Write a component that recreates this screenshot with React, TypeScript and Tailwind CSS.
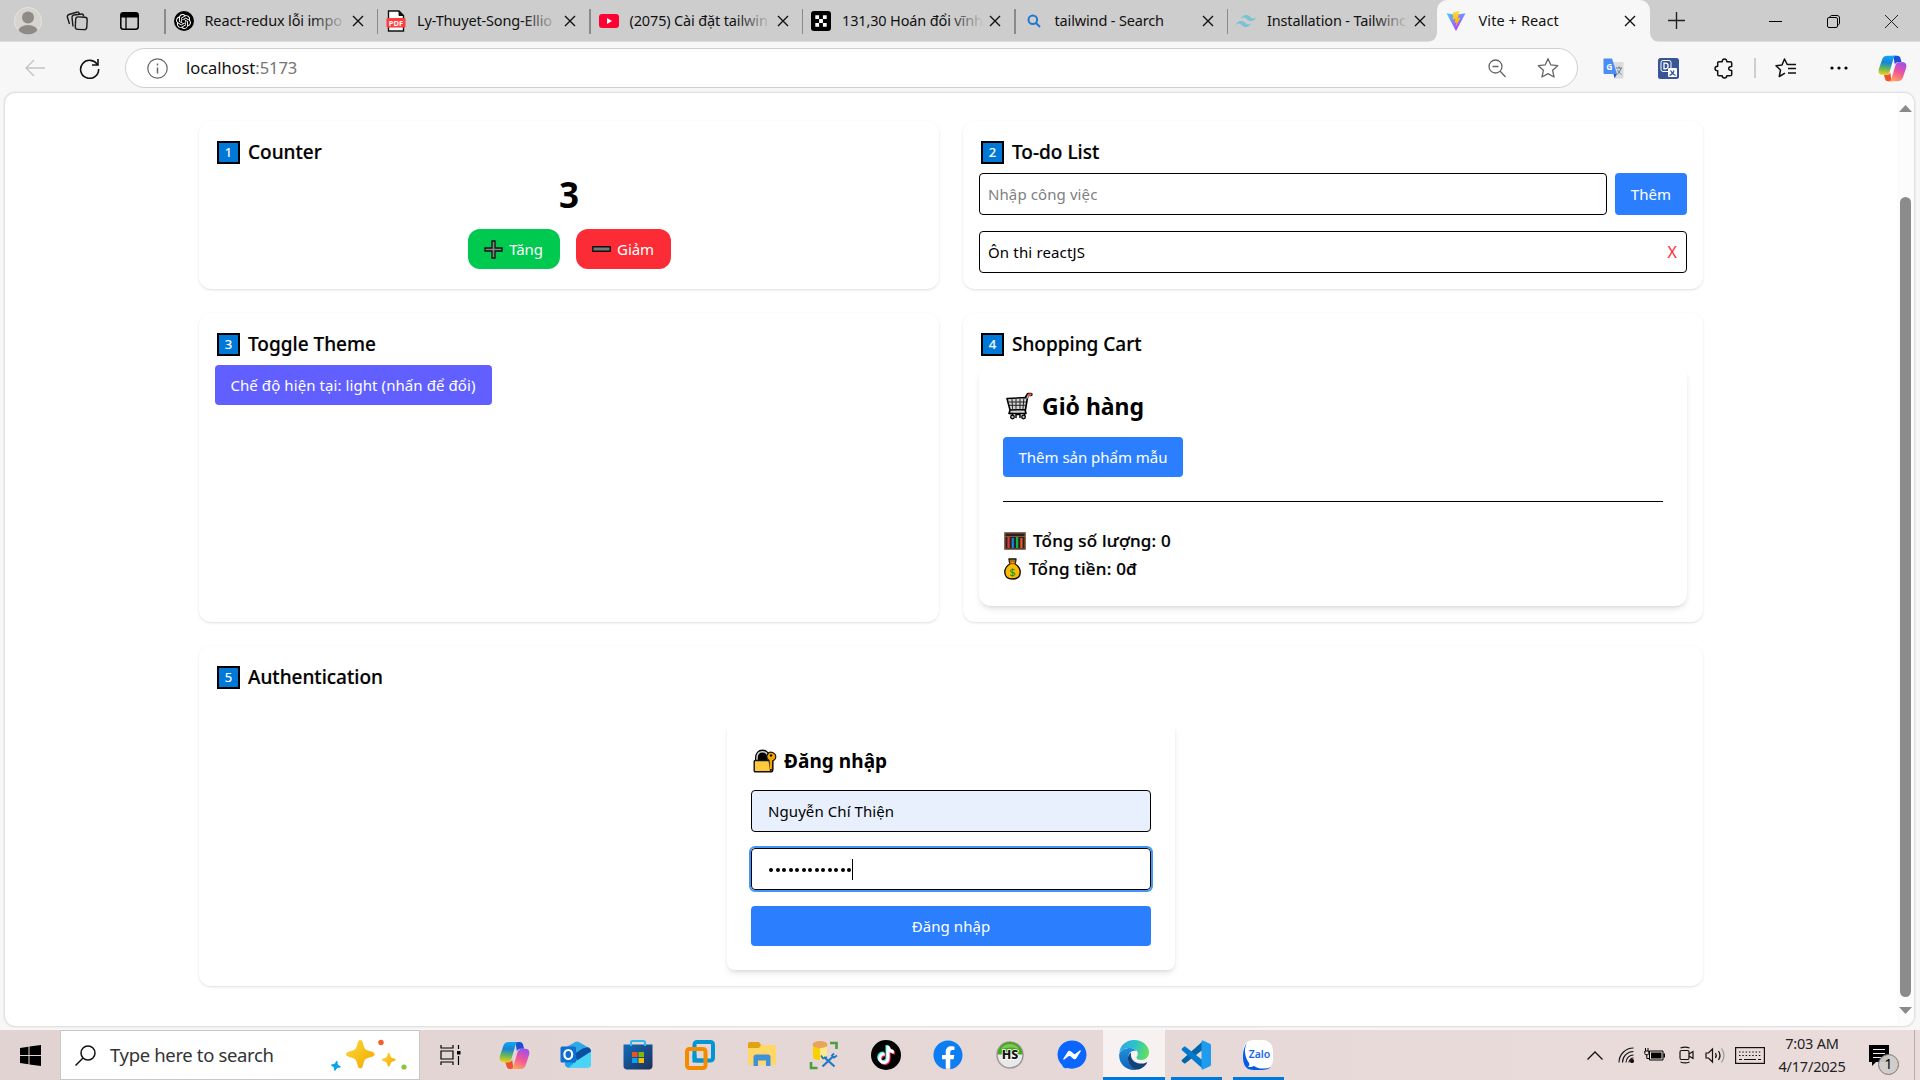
import React from 'react';
import { SiOpenai, SiTailwindcss } from 'react-icons/si';
import { FaTiktok, FaFacebook, FaFacebookMessenger } from 'react-icons/fa';

type Kids = { children?: React.ReactNode };

/* ---------- shared drawings ---------- */

function Copilot({ size, id }: { size: number; id: string }) {
  return (
    <svg width={size} height={size} viewBox="0 0 32 32">
      <defs>
        <linearGradient id={id + 'a'} x1="0.4" y1="0" x2="0.3" y2="1">
          <stop offset="0" stopColor="#12a5f0" />
          <stop offset="0.35" stopColor="#1784d8" />
          <stop offset="0.65" stopColor="#5fb560" />
          <stop offset="1" stopColor="#f5cf12" />
        </linearGradient>
        <linearGradient id={id + 'b'} x1="0.7" y1="0" x2="0.3" y2="1">
          <stop offset="0" stopColor="#a04df0" />
          <stop offset="0.5" stopColor="#f0559b" />
          <stop offset="1" stopColor="#ffa35c" />
        </linearGradient>
      </defs>
      <path d="M17 2h4.500c1.800 0 2.800 1 3.300 2.800L26 9h-4c-2 0-3 1-3.500 2.800z" fill="#1c4fd6" />
      <path d="M15 30h-4c-1.800 0-2.700-1-3.200-2.800L6.500 23H10c2 0 3-1 3.500-2.800z" fill="#f0512e" />
      <path d="M10.500 2H20c-1.600.3-2.400 1.500-3 3.500L12.800 19.500c-.8 2.400-2 3.500-4.300 3.500H5c-4 0-5-3-4-6.500L4.500 6C5.500 3 7.500 2 10.500 2z" fill={`url(#${id}a)`} />
      <path d="M21.500 30H12c1.600-.3 2.400-1.500 3-3.500l4.200-14c.8-2.400 2-3.500 4.300-3.500H27c4 0 5 3 4 6.500L27.500 26c-1 3-3 4-6 4z" fill={`url(#${id}b)`} />
    </svg>
  );
}

function Close() {
  return (
    <svg width="12" height="12" viewBox="0 0 12 12" className="shrink-0" fill="none" stroke="#111" strokeWidth="1.4">
      <path d="M1 1l10 10M11 1L1 11" />
    </svg>
  );
}

/* ---------- browser chrome ---------- */

function PdfIcon() {
  return (
    <svg width="20" height="22" viewBox="0 0 20 22">
      <path d="M2.500 1H13l4.500 4.500V21h-15z" fill="#fff" stroke="#111" strokeWidth="1.400" />
      <path d="M13 1v4.500h4.500z" fill="#111" stroke="#111" />
      <rect x="0.500" y="8" width="19" height="9.500" rx="1" fill="#ff3d3d" />
      <text x="10" y="15.500" textAnchor="middle" fontSize="7.500" fontWeight="700" fill="#fff" fontFamily="Noto Sans, sans-serif">PDF</text>
    </svg>
  );
}
function YoutubeIcon() {
  return (
    <svg width="20" height="14" viewBox="0 0 20 14">
      <rect width="20" height="14" rx="3" fill="#ff0033" />
      <path d="M8 4v6l5-3z" fill="#fff" />
    </svg>
  );
}
function OkxIcon() {
  return (
    <svg width="20" height="20" viewBox="0 0 20 20">
      <rect width="20" height="20" rx="3" fill="#000" />
      <path d="M4.300 4.300h3.800v3.800H4.300zM11.900 4.300h3.800v3.800h-3.800zM8.100 8.100h3.800v3.800H8.100zM4.300 11.900h3.800v3.800H4.300zM11.900 11.900h3.800v3.800h-3.800z" fill="#fff" />
    </svg>
  );
}
function BingSearch() {
  return (
    <svg width="14" height="14" viewBox="0 0 14 14" fill="none" stroke="#1f77d0" strokeWidth="2">
      <circle cx="5.800" cy="5.800" r="4.300" />
      <path d="M9 9l4 4" />
    </svg>
  );
}
function ViteIcon() {
  return (
    <svg width="20" height="20" viewBox="0 0 20 20">
      <defs>
        <linearGradient id="vt" x1="0" y1="0" x2="0.600" y2="1">
          <stop offset="0" stopColor="#41d1ff" />
          <stop offset="1" stopColor="#bd34fe" />
        </linearGradient>
        <linearGradient id="vb" x1="0" y1="0" x2="0" y2="1">
          <stop offset="0" stopColor="#ffdd35" />
          <stop offset="1" stopColor="#ffa800" />
        </linearGradient>
      </defs>
      <path d="M.5 2.200L10 3.700l9.500-1.500L10 20z" fill="url(#vt)" />
      <path d="M13.500 0L7.200 1.200l-.5 7.300 2.700-.5-.8 3.700 1.900-.5-.8 4.600 4.800-9-2.700.5z" fill="url(#vb)" />
    </svg>
  );
}

function Tab({ icon, title, fade }: { icon: React.ReactNode; title: string; fade?: boolean }) {
  return (
    <div className="flex h-[42px] w-[212.5px] items-center">
      <div className="h-[25px] w-[1.5px] bg-[#8a8a8a]" />
      <div className="ml-[7px] flex w-[22px] justify-center">{icon}</div>
      <div className="relative mt-[-2px] ml-[10px] w-[138px]">
        <div className="text-[14.500px] leading-6 tracking-[-0.150px] whitespace-nowrap text-[#111]">{title}</div>
        {fade && <div className="absolute inset-y-0 -right-1 w-9 bg-linear-to-r from-[#cdcdcd]/0 to-[#cdcdcd]" />}
      </div>
      <div className="relative ml-[9px]"><Close /></div>
    </div>
  );
}

function TabBar() {
  return (
    <div className="flex h-[42px] bg-[#cdcdcd] shadow-[inset_0_-1px_0_#dedede]">
      <div className="flex w-[164px] items-center">
        <svg width="28" height="28" viewBox="0 0 28 28" className="ml-[14px]">
          <clipPath id="av"><circle cx="14" cy="14" r="13.500" /></clipPath>
          <circle cx="14" cy="14" r="13.500" fill="#d6d4cf" stroke="#e6e4e0" />
          <g clipPath="url(#av)" fill="#8d8a87">
            <circle cx="14" cy="10.500" r="6" />
            <ellipse cx="14" cy="25" rx="10" ry="7" />
          </g>
        </svg>
        <svg width="22" height="20" viewBox="0 0 22 20" className="ml-[24px]" fill="none" stroke="#1a1a1a" strokeWidth="1.400" strokeLinejoin="round">
          <rect x="9.500" y="6" width="11.500" height="12.500" rx="2.500" transform="rotate(3 15 12)" />
          <path d="M7 15.500l-1-9C5.900 5 6.500 4.200 8 4l8-1M3.500 13l-2-6.500C1 5 1.500 4 3 3.500L11.500 1" />
          <path d="M16 3c1 0 1.500.8 1.600 2.500M11.500 1c1 0 1.500.4 2 2" />
        </svg>
        <svg width="19" height="18" viewBox="0 0 19 18" className="ml-[32px]">
          <rect x="0.800" y="0.800" width="17.400" height="16.400" rx="2.500" fill="none" stroke="#000" strokeWidth="1.500" />
          <path d="M.8 5.500V3c0-1.300.9-2.200 2.200-2.200h13c1.300 0 2.200.9 2.200 2.200v2.500z" />
          <path d="M6 5v12" stroke="#000" strokeWidth="1.300" />
        </svg>
      </div>
      <Tab icon={<div className="flex size-5 items-center justify-center rounded-full bg-black"><SiOpenai size={15} color="#fff" /></div>} title="React-redux lỗi impo" fade />
      <Tab icon={<PdfIcon />} title="Ly-Thuyet-Song-Ellio" fade />
      <Tab icon={<YoutubeIcon />} title="(2075) Cài đặt tailwin" fade />
      <Tab icon={<OkxIcon />} title="131,30 Hoán đổi vĩnh" fade />
      <Tab icon={<BingSearch />} title="tailwind - Search" />
      <div className="w-[210px]"><Tab icon={<SiTailwindcss size={20} color="#73c5d2" />} title="Installation - Tailwinc" fade /></div>
      <div className="relative flex h-[42px] w-[213px] items-center rounded-t-[10px] bg-[#f7f7f7]">
        <svg width="233" height="10" viewBox="0 0 233 10" className="absolute bottom-0 -left-[10px]" fill="#f7f7f7">
          <path d="M0 10c6 0 10-4 10-10h213c0 6 4 10 10 10z" />
        </svg>
        <div className="relative ml-[9px]"><ViteIcon /></div>
        <div className="relative mt-[-2px] ml-[13px] w-[145px] text-[14.500px] leading-6 tracking-[0.100px] text-[#111]">Vite + React</div>
        <div className="relative"><Close /></div>
      </div>
      <svg width="17" height="17" viewBox="0 0 17 17" className="mt-[12px] ml-[18px]" stroke="#222" strokeWidth="1.400"><path d="M8.500 0v17M0 8.500h17" /></svg>
      <div className="flex flex-1 items-center justify-end gap-[45px] pr-[22px]">
        <svg width="13" height="13" viewBox="0 0 13 13" stroke="#000"><path d="M0 6.500h13" /></svg>
        <svg width="13" height="13" viewBox="0 0 13 13" fill="none" stroke="#000"><rect x="0.500" y="2.500" width="10" height="10" rx="1.500" /><path d="M3 2.500C3 1.200 3.700.5 5 .5h5c1.600 0 2.500.9 2.500 2.500v5c0 1.200-.7 2-2 2" /></svg>
        <svg width="13" height="13" viewBox="0 0 13 13" stroke="#222"><path d="M0 0l13 13M13 0L0 13" /></svg>
      </div>
    </div>
  );
}

const star = 'M10 1.500l2.600 5.700 6.200.7-4.600 4.200 1.300 6.100L10 15.100l-5.500 3.100 1.300-6.100L1.200 7.900l6.200-.7z';

function Toolbar() {
  return (
    <div className="flex h-[51px] items-center pt-[1px]">
      <svg width="20" height="18" viewBox="0 0 20 18" className="ml-[25px]" fill="none" stroke="#c4c4c4" strokeWidth="1.400"><path d="M20 9H1M9 1L1 9l8 8" /></svg>
      <svg width="21" height="21" viewBox="0 0 21 21" className="ml-[34px]" fill="none" stroke="#111" strokeWidth="1.600"><path d="M18.500 7A9 9 0 1 0 19.600 11" /><path d="M19 1v6h-6" /></svg>
      <div className="ml-[25px] flex h-[40px] w-[1453px] items-center rounded-full border border-[#cfcfcf] bg-white">
        <svg width="21" height="21" viewBox="0 0 21 21" className="ml-[21px]" fill="none" stroke="#666" strokeWidth="1.200"><circle cx="10.500" cy="10.500" r="9.700" /><path d="M10.500 9.500v6M10.500 5.500v2" strokeWidth="1.500" /></svg>
        <div className="ml-[18px] flex-1 text-[16.500px] tracking-[-0.050px] text-[#111]">localhost<span className="text-[#757575]">:5173</span></div>
        <svg width="18" height="19" viewBox="0 0 18 19" fill="none" stroke="#666" strokeWidth="1.300"><circle cx="7.500" cy="7.500" r="6.500" /><path d="M12.200 12.200l5.300 5.800M4.500 7.500h6" /></svg>
        <svg width="22" height="22" viewBox="0 0 20 20" className="mr-[18px] ml-[31px]" fill="none" stroke="#666" strokeWidth="1.200" strokeLinejoin="round"><path d={star} /></svg>
      </div>
      <svg width="21" height="21" viewBox="0 0 21 21" className="ml-[25px]">
        <path d="M8 4h11.500c.6 0 1 .4 1 1v14.500c0 .6-.4 1-1 1H12z" fill="#dcdcdc" />
        <path d="M10.500 16H14l-2.500 4.500z" fill="#3256c8" />
        <path d="M1.200.5H9L14 16H1.500C1 16 .5 15.500.5 15V1.200C.5.800.8.500 1.200.500z" fill="#4b8df8" />
        <text x="6.300" y="11.500" textAnchor="middle" fontSize="8.500" fontWeight="700" fill="#fff" fontFamily="Noto Sans, sans-serif">G</text>
        <path d="M13 10h6M16 8.500V10M18 10c-.8 3-2.300 5-4 6.500M14.500 12c1 2 2.300 3.300 4 4.500" stroke="#5f7d8c" fill="none" />
      </svg>
      <svg width="21" height="21" viewBox="0 0 21 21" className="ml-[34px]">
        <rect width="21" height="21" rx="2.500" fill="#3a5596" />
        <rect x="3" y="2.500" width="10" height="11" rx="2" fill="none" stroke="#fff" strokeWidth="1" />
        <path d="M6 5.200h1.500c3.500 0 3.500 5.600 0 5.600H6z" fill="none" stroke="#fff" strokeWidth="1.300" />
        <rect x="10" y="10" width="9" height="9" rx="1" fill="#fff" />
        <path d="M11.500 17.500c3-1 4-3 4.500-5M12.500 12.500c1 2.500 3 4 5 5" stroke="#3a5596" fill="none" strokeWidth="1.200" />
      </svg>
      <svg width="21" height="21" viewBox="0 0 21 21" className="ml-[35px]" fill="none" stroke="#111" strokeWidth="1.500" strokeLinejoin="round">
        <path d="M5 3.800h3.200c0-1.800.8-2.800 2.300-2.800s2.300 1 2.300 2.800H16c.8 0 1.700.5 1.700 1.300v3.400c-1.700 0-3 .7-3 2s1.300 2 3 2v4c0 .8-.9 1.300-1.700 1.300h-3.200c0 1.500-.8 2.200-2.300 2.200s-2.300-.7-2.300-2.200H5c-.8 0-1.300-.5-1.300-1.300v-3.700C2 12.800 1 11.900 1 10.500s1-2.300 2.700-2.300V5.100c0-.8.500-1.300 1.300-1.300z" />
      </svg>
      <div className="ml-[19px] h-5 w-[2px] bg-[#cfcfcf]" />
      <svg width="21" height="20" viewBox="0 0 21 20" className="ml-[19px]" fill="none" stroke="#111" strokeWidth="1.500" strokeLinejoin="round">
        <path d="M12.500 7L9.500 1 7 7l-6 .8 4.500 4.200-1.200 6.500L10 15.200M13 10.500h8M13 15h8M12.500 6.500H21" />
      </svg>
      <svg width="18" height="4" viewBox="0 0 18 4" className="ml-[34px]"><circle cx="2" cy="2" r="1.600" /><circle cx="9" cy="2" r="1.600" /><circle cx="16" cy="2" r="1.600" /></svg>
      <div className="ml-[30px]"><Copilot size={29} id="ct" /></div>
    </div>
  );
}

/* ---------- page ---------- */

function Keycap({ n }: { n: string }) {
  return (
    <span className="mr-[8px] ml-[2px] flex h-[23px] w-[23px] items-center justify-center border-2 border-black bg-[#0078d7] text-[13px] leading-none font-normal text-white">{n}</span>
  );
}

function Section({ n, title, className, children }: Kids & { n: string; title: string; className?: string }) {
  return (
    <section className={'rounded-xl p-4 shadow-[0_1px_3px_rgba(0,0,0,0.1),0_1px_2px_-1px_rgba(0,0,0,0.1)] ' + (className || '')}>
      <h2 className="mb-2 flex h-7 items-center pt-[2px] text-[19px] font-medium tracking-[0px] [-webkit-text-stroke:0.200px]"><Keycap n={n} />{title}</h2>
      {children}
    </section>
  );
}

function CartEmoji() {
  return (
    <svg width="28" height="28" viewBox="0 0 28 28" fill="none" strokeLinejoin="round" strokeLinecap="round">
      <path d="M21 6l2-3.500h3" stroke="#000" strokeWidth="3.400" />
      <path d="M2 6.500l20.500-1-2 12-15.500.5zM5 18l-1 3.500h17l-1-4" fill="#d4d4d4" stroke="#000" strokeWidth="1.600" />
      <path d="M7 7.500l.5 9M11 7.500v9M15 7v9.500M18.800 7l-.8 9.500M3.500 10h17M4 13.300h16.500" stroke="#222" strokeWidth="1" />
      <path d="M22 6l1.500-3.200h2" stroke="#bbb" strokeWidth="1.400" />
      <path d="M24 2.600l1.500-.2" stroke="#e8523a" strokeWidth="2.400" />
      <path d="M5 21.500h2.500v4M11 25.500v-3h4v3M19.500 21.500v4" stroke="#000" strokeWidth="1.500" />
      <circle cx="7.500" cy="25" r="1.800" fill="#bbb" stroke="#000" strokeWidth="1.300" />
      <circle cx="18.500" cy="25" r="1.800" fill="#bbb" stroke="#000" strokeWidth="1.300" />
    </svg>
  );
}
function Abacus() {
  return (
    <svg width="22" height="18" viewBox="0 0 22 18">
      <rect x="1" y="1" width="20" height="16" fill="#2a211c" stroke="#6b4a35" strokeWidth="1.600" />
      <path d="M4.500 5v11" stroke="#e33" strokeWidth="2.200" />
      <path d="M8.800 6v10" stroke="#0c8ae0" strokeWidth="2.200" />
      <path d="M13.100 5v11" stroke="#16b04a" strokeWidth="2.200" />
      <path d="M17.400 6v10" stroke="#e55a28" strokeWidth="2.200" />
      <path d="M1 4.500h20" stroke="#7a5a44" />
    </svg>
  );
}
function MoneyBag() {
  return (
    <svg width="17" height="22" viewBox="0 0 17 22">
      <path d="M5 1h7l-.8 5c3.200 2 5 5 5 8 0 4.500-2.700 7-7.700 7S.8 18.500.8 14c0-3 1.800-6 5-8z" fill="#fdb900" stroke="#111" strokeWidth="1.400" strokeLinejoin="round" />
      <path d="M5.500 3h6M5.500 5.500h6" stroke="#9c5a10" strokeWidth="1.500" />
      <text x="8.500" y="17.500" textAnchor="middle" fontSize="11" fontWeight="500" fill="#189a2c" fontFamily="Noto Sans, sans-serif">$</text>
    </svg>
  );
}
function LockKey() {
  return (
    <svg width="24" height="24" viewBox="0 0 24 24">
      <path d="M3 12V9C3 4.500 5.500 1.500 9.500 1.500S16 4.500 16 9v3z" fill="#000" stroke="#000" strokeWidth="2" />
      <path d="M4 12V9c0-4 2-6.300 5.500-6.300S15 5 15 9v3" fill="none" stroke="#d4d4d4" strokeWidth="1.500" />
      <path d="M6 11.500V9.500c0-3 1.500-4.500 3.500-4.500s4 2 4 4.500v2z" fill="#000" />
      <rect x="1.200" y="11.500" width="18.500" height="11.300" rx="1" fill="#ffc83d" stroke="#111" strokeWidth="1.400" />
      <path d="M16 12h3v10h-3z" fill="#f3a600" />
      <path d="M16 11.500c-2-1.500-2.700-3.700-1.800-5.500 1-2.300 3.500-3.200 5.800-2.300s3.300 3.400 2.400 5.800c-.6 1.400-1.700 2-2.700 2.400V20l-2 1.500z" fill="#f3a600" stroke="#111" strokeWidth="1.200" />
      <path d="M16.700 11.800h2.300V20h-2.300z" fill="#f3a600" />
      <circle cx="18" cy="6.500" r="1.200" fill="#111" />
    </svg>
  );
}

function Content() {
  return (
    <main className="flex-1 pt-[28px] pr-[194px] pl-[194px]">
      <div className="grid grid-cols-2 gap-6">
        <Section n="1" title="Counter" className="h-[168px]">
          <div className="pt-[3px] text-center text-[35px] leading-[37px] font-bold">3</div>
          <div className="mt-4 flex justify-center gap-4 text-[15px] text-white">
            <button className="flex h-10 w-[92px] items-center justify-center rounded-xl bg-[#00c950] tracking-[-0.100px]">
              <svg width="19" height="19" viewBox="0 0 19 19" className="mr-[6px]"><path d="M8 1h3v7h7v3h-7v7H8v-7H1V8h7z" fill="#858585" stroke="#111" strokeWidth="1.300" /></svg>
              Tăng
            </button>
            <button className="flex h-10 w-[95px] items-center justify-center rounded-xl bg-[#fb2c36] tracking-[-0.100px]">
              <svg width="19" height="6" viewBox="0 0 19 6" className="mr-[6px]"><path d="M.8.8h17.400v4.400H.8z" fill="#777" stroke="#111" strokeWidth="1.400" /></svg>
              Giảm
            </button>
          </div>
        </Section>

        <Section n="2" title="To-do List" className="h-[168px] text-[15px]">
          <div className="flex gap-2">
            <div className="flex h-[42px] flex-1 items-center rounded border border-black px-2 tracking-[0.100px] text-[#808080]">Nhập công việc</div>
            <button className="h-[42px] w-[72px] rounded bg-[#2b7fff] tracking-[0.050px] text-white">Thêm</button>
          </div>
          <div className="mt-4 flex h-[42px] items-center justify-between rounded border border-black pr-[9px] pl-2 tracking-[0.150px]">
            <span>Ôn thi reactJS</span>
            <span className="text-[16px] text-[#fb2c36]">X</span>
          </div>
        </Section>

        <Section n="3" title="Toggle Theme">
          <button className="h-10 w-[277px] rounded bg-[#615fff] pr-[1px] text-[15px] tracking-[0.080px] whitespace-nowrap text-white">Chế độ hiện tại: light (nhấn để đổi)</button>
        </Section>

        <Section n="4" title="Shopping Cart" className="h-[309px]">
          <div className="h-[241px] rounded-xl p-6 shadow-md">
            <h3 className="mb-4 flex h-8 items-center pt-[2px] text-[23px] font-bold tracking-[0px]"><span className="mr-[9px] ml-[2px]"><CartEmoji /></span>Giỏ hàng</h3>
            <button className="h-10 w-[180px] rounded bg-[#2b7fff] text-[15px] tracking-[-0.020px] whitespace-nowrap text-white">Thêm sản phẩm mẫu</button>
            <div className="my-6 h-px bg-black" />
            <div className="text-[17px] leading-7 font-medium tracking-[0.200px] [-webkit-text-stroke:0.200px]">
              <div className="flex h-7 items-center pt-[1px]"><span className="mr-[7px] ml-[1px]"><Abacus /></span>Tổng số lượng: 0</div>
              <div className="flex h-7 items-center pt-[1px]"><span className="mr-[8px] ml-[1px]"><MoneyBag /></span>Tổng tiền: 0đ</div>
            </div>
          </div>
        </Section>

        <Section n="5" title="Authentication" className="col-span-2 h-[340px]">
          <div className="mx-auto mt-[32px] h-[248px] w-[448px] rounded-lg p-6 text-[15px] shadow-md">
            <h3 className="mb-4 flex h-7 items-center pt-[2px] text-[19px] font-bold tracking-[0.050px]"><span className="mr-[7px] ml-[2px]"><LockKey /></span>Đăng nhập</h3>
            <div className="flex h-[42px] items-center rounded border border-black bg-[#e8f0fe] px-4 tracking-[0.080px]">Nguyễn Chí Thiện</div>
            <div className="mt-4 flex h-[42px] items-center rounded border border-black px-4 outline-2 outline-[#4196f7]">
              <div className="mt-[2px] flex gap-[2.500px] pl-[1px]">
                {Array.from({ length: 13 }, (_, i) => <span key={i} className="size-[4px] rounded-full bg-black" />)}
              </div>
              <div className="ml-px h-[21px] w-px bg-black" />
            </div>
            <button className="mt-4 h-10 w-full rounded bg-[#2b7fff] tracking-[0.050px] text-white">Đăng nhập</button>
          </div>
        </Section>
      </div>
    </main>
  );
}

/* ---------- taskbar ---------- */

const spark = 'M10 0c1.200 0 1.600 1 2.100 3C13 6.500 13.500 7 17 7.900c2 .5 3 1 3 2.100s-1 1.600-3 2.100c-3.500.9-4 1.400-4.900 4.900-.5 2-1 3-2.100 3s-1.600-1-2.100-3C7 13.500 6.500 13 3 12.100c-2-.5-3-1-3-2.100s1-1.600 3-2.100C6.500 7 7 6.500 7.900 3 8.400 1 8.900 0 10 0z';

function Sparkles() {
  return (
    <svg width="78" height="34" viewBox="0 0 78 34">
      <defs><linearGradient id="sg" x1="0" y1="0" x2="1" y2="1"><stop offset="0" stopColor="#ffd83a" /><stop offset="1" stopColor="#f0a800" /></linearGradient></defs>
      <path d={spark} transform="translate(15 2) scale(1.430)" fill="url(#sg)" />
      <path d={spark} transform="translate(51 15) scale(0.680)" fill="url(#sg)" />
      <path d={spark} transform="translate(1 22) rotate(12) scale(0.500)" fill="#08a4ee" />
      <circle cx="50" cy="4.500" r="2.700" fill="#f2602a" />
      <circle cx="73" cy="29" r="2.600" fill="#8cc63f" />
    </svg>
  );
}

function Outlook() {
  return (
    <svg width="32" height="30" viewBox="0 0 32 30">
      <path d="M5 8L15.500 2c1.200-.7 2.200-.7 3.400 0L29 8c1.300.8 2 1.800 2 3.500V24c0 2-1.300 3.500-3.500 3.500H9c-2.500 0-4-1.500-4-4z" fill="#2aabe8" />
      <path d="M5 21l26-9.500V24c0 2-1.300 3.500-3.500 3.500H9c-2.500 0-4-1.500-4-4z" fill="#49d5f8" />
      <path d="M5 17l14.500 1L9 27.500c-2.500 0-4-1.500-4-4z" fill="#1aa3e8" />
      <path d="M14 12l6-3.200L28 7.300c2 1 3 2 3 4.200L17 20.500z" fill="#0b4fa3" />
      <path d="M5 8l11-6.300L26 6.500 14 14z" fill="#2fa9e6" />
      <rect x="0.500" y="6.500" width="15.500" height="16" rx="1.500" fill="#0f6fd0" />
      <ellipse cx="8.300" cy="14.500" rx="3.900" ry="4.500" fill="none" stroke="#fff" strokeWidth="2.200" />
    </svg>
  );
}
function Store() {
  return (
    <svg width="30" height="30" viewBox="0 0 30 30">
      <defs><linearGradient id="st" x1="0" y1="0" x2="1" y2="1"><stop offset="0" stopColor="#0f6cbd" /><stop offset="1" stopColor="#1f2f57" /></linearGradient></defs>
      <path d="M.5 4.500h29V26c0 2-1.500 3.500-3.500 3.500H4C2 29.500.5 28 .5 26z" fill="url(#st)" />
      <path d="M8 6V2.500C8 1.500 8.500 1 9.500 1h11c1 0 1.500.5 1.500 1.500V6" fill="none" stroke="#2bb6f2" strokeWidth="2" />
      <rect x="9" y="12" width="5.500" height="5" fill="#f25022" /><rect x="15.500" y="12" width="5.500" height="5" fill="#7fba00" />
      <rect x="9" y="18" width="5.500" height="5" fill="#00a4ef" /><rect x="15.500" y="18" width="5.500" height="5" fill="#ffb900" />
    </svg>
  );
}
function VMware() {
  return (
    <svg width="30" height="30" viewBox="0 0 30 30" fill="none" strokeWidth="4">
      <rect x="9.500" y="2" width="18.500" height="18.500" rx="2.500" stroke="#0095d3" />
      <rect x="2" y="9" width="18.500" height="19" rx="2.500" stroke="#f38b00" />
      <path d="M9.500 14.500V20.500H18" stroke="#0095d3" strokeWidth="4" />
    </svg>
  );
}
function Folder() {
  return (
    <svg width="28" height="26" viewBox="0 0 28 26">
      <path d="M0 2C0 .8.8 0 2 0h9l3 4v4H0z" fill="#dfa310" />
      <path d="M0 6h11l2-3h13c1.200 0 2 .8 2 2v18H0z" fill="#ffd767" />
      <path d="M5.500 24v-9c0-1.500 1-2.500 2.500-2.500h12c1.500 0 2.500 1 2.500 2.500v9H18v-5.500h-8V24z" fill="#3f8fd9" />
    </svg>
  );
}
function DbTool() {
  return (
    <svg width="30" height="30" viewBox="0 0 30 30">
      <path d="M4 4v13c0 2 3 3 7 3s7-1 7-3V4z" fill="#f9d000" />
      <path d="M11 7h7v10c0 2-3 3-7 3z" fill="#ffe98a" />
      <ellipse cx="11" cy="4.500" rx="7.500" ry="3.500" fill="#e8a45c" />
      <path d="M21 3h6.500v6M2 22v6h6.500" fill="none" stroke="#4c9b46" strokeWidth="2.600" />
      <path d="M13.500 26.500L24 16.500M15 17l10.500 9.500" stroke="#1f78c8" strokeWidth="2.200" />
      <path d="M12 15.500l2 3 4-1.500M28 15.500l-3 2-2-2 2-2" stroke="#1f78c8" strokeWidth="1.800" fill="none" />
    </svg>
  );
}
function Tiktok() {
  return (
    <div className="relative flex size-[30px] items-center justify-center rounded-full bg-black">
      <FaTiktok size={18} color="#25f4ee" className="absolute top-[5px] left-[5px]" />
      <FaTiktok size={18} color="#fe2c55" className="absolute top-[7px] left-[7px]" />
      <FaTiktok size={18} color="#fff" className="absolute top-[6px] left-[6px]" />
    </div>
  );
}
function HeidiSql() {
  return (
    <svg width="28" height="28" viewBox="0 0 28 28">
      <circle cx="14" cy="14" r="13" fill="#e9e9e9" stroke="#9a9a9a" strokeWidth="1.500" />
      <path d="M1.500 13.500a12.500 12.500 0 0 1 25 0z" fill="#4aa521" />
      <path d="M5 8a10.500 10.500 0 0 1 18 0q-9-3-18 0z" fill="#7cc858" />
      <text x="14" y="18" textAnchor="middle" fontSize="12.500" fontWeight="800" fill="#111" stroke="#fff" strokeWidth="1.600" paintOrder="stroke" fontFamily="Noto Sans, sans-serif">HS</text>
    </svg>
  );
}
function EdgeIcon() {
  return (
    <svg width="30" height="30" viewBox="0 0 30 30">
      <defs>
        <linearGradient id="e1" x1="0" y1="0.300" x2="1" y2="0.500"><stop offset="0" stopColor="#2ea8e5" /><stop offset="0.500" stopColor="#2cc3c9" /><stop offset="1" stopColor="#66e05a" /></linearGradient>
        <linearGradient id="e2" x1="0" y1="0" x2="0" y2="1"><stop offset="0" stopColor="#1f90dd" /><stop offset="1" stopColor="#0f62b8" /></linearGradient>
      </defs>
      <path d="M.3 13C1 5.500 7 0 15 0c9 0 15 6 15 12.500 0 4.500-3.500 7.500-7.500 7.500-3 0-5-1-5-2.300 0-1 1.300-1.500 1.300-4C18.800 10.500 15.500 8 11 8 6 8 2 10 .3 13z" fill="url(#e1)" />
      <path d="M.2 14C1.500 10.300 6 8 11 8c3.500 0 5.500 1.500 6.300 3C13 9.500 9 13 9 18c0 6 4 11 10 11.500C8 32-.8 24 .2 14z" fill="url(#e2)" />
      <path d="M12 12.500c-2.500 2-3.500 4.300-3 7.500.8 5.500 5 9.800 10.500 9.500 3.500-1 6.800-3.500 8.500-6.500.3-.7-.2-1-.8-.6-1.500.8-3.200 1.200-5 1.200-5.500 0-9.700-3.300-10.200-7.600-.2-1.500 0-2.500 0-3.500z" fill="#12427c" />
    </svg>
  );
}
function VSCode() {
  return (
    <svg width="30" height="30" viewBox="0 0 30 30">
      <path d="M22 1v8.500L4.500 23.200c-.5.400-1 .4-1.500 0l-2-1.700c-.6-.6-.6-1.200 0-1.800z" fill="#0065a9" />
      <path d="M22 29v-8.500L4.500 6.800C4 6.400 3.500 6.400 3 6.800L1 8.500c-.6.600-.6 1.200 0 1.800z" fill="#007acc" />
      <path d="M22 .5l6.500 3c1 .5 1.500 1 1.500 2v19c0 1-.5 1.500-1.500 2l-6.500 3c-.8.300-1.500 0-1.500-.8V1.300c0-.8.700-1.100 1.500-.8z" fill="#1f9cf0" />
    </svg>
  );
}
function Zalo() {
  return (
    <svg width="30" height="30" viewBox="0 0 30 30">
      <rect width="30" height="30" rx="10" fill="#fff" />
      <path d="M4 3C-1 8-1 22 2 26c2 3 5 4 9 4h8c4 0 7-1 9-3-6 2.500-13 2-17-1-2 1-4 1-6 1 1-1 2-2 1-4C1 16 1 8 4 3z" fill="#0a5ae8" />
      <text x="16.500" y="17.500" textAnchor="middle" fontSize="10.500" fontWeight="600" fill="#1a66ee" fontFamily="Noto Sans, sans-serif">Zalo</text>
    </svg>
  );
}

function AppSlot({ children, active, open }: Kids & { active?: boolean; open?: boolean }) {
  return (
    <div className={'relative flex h-[50px] w-[62px] items-center justify-center ' + (active ? 'bg-[#f7f2f1]' : '')}>
      {children}
      {active && <div className="absolute bottom-0 h-[3px] w-full bg-[#0078d7]" />}
      {open && <div className="absolute bottom-0 h-[3px] w-[51px] bg-[#0078d7]" />}
    </div>
  );
}

function Taskbar() {
  return (
    <div className="flex h-[50px] bg-linear-to-r from-[#e1d3d2] to-[#eadcdb]">
      <div className="flex w-[60px] items-center justify-center">
        <svg width="21" height="21" viewBox="0 0 21 21"><path d="M0 3l8.500-1.200V10H0zM9.500 1.600L21 0v10H9.500zM0 11h8.500v8.200L0 18zM9.500 11H21v10L9.500 19.400z" /></svg>
      </div>
      <div className="flex w-[360px] items-center border border-[#c8c8c8] bg-white">
        <svg width="21" height="21" viewBox="0 0 21 21" className="ml-[14px]" fill="none" stroke="#111" strokeWidth="1.500"><circle cx="13" cy="8" r="7" /><path d="M8 13l-7.500 7.500" /></svg>
        <div className="ml-[14px] flex-1 text-[18.500px] tracking-[-0.350px] whitespace-nowrap text-[#333]">Type here to search</div>
        <div className="mr-[10px]"><Sparkles /></div>
      </div>
      <div className="mr-[3px] flex w-[60px] items-center justify-center">
        <svg width="21" height="20" viewBox="0 0 21 20" fill="none" stroke="#000" strokeWidth="1.200"><path d="M1 0v3h12V0M1 20v-3h12v3M1 6h12v8H1zM18.500 0v4M18.500 11v9" /><path d="M17 6h3.500v3.500H17z" fill="#000" stroke="none" /></svg>
      </div>
      <AppSlot><Copilot size={31} id="cb" /></AppSlot>
      <AppSlot><Outlook /></AppSlot>
      <AppSlot><Store /></AppSlot>
      <AppSlot><VMware /></AppSlot>
      <AppSlot><Folder /></AppSlot>
      <AppSlot><DbTool /></AppSlot>
      <AppSlot><Tiktok /></AppSlot>
      <AppSlot><div className="rounded-full bg-[radial-gradient(circle,#fff_60%,transparent_62%)]"><FaFacebook size={30} color="#0d7df2" /></div></AppSlot>
      <AppSlot><HeidiSql /></AppSlot>
      <AppSlot><FaFacebookMessenger size={30} color="#0a66ff" className="rounded-full bg-[radial-gradient(circle,#fff_55%,transparent_57%)]" /></AppSlot>
      <AppSlot active><EdgeIcon /></AppSlot>
      <AppSlot open><VSCode /></AppSlot>
      <AppSlot open><Zalo /></AppSlot>
      <div className="flex flex-1 items-center justify-end">
        <svg width="16" height="9" viewBox="0 0 16 9" fill="none" stroke="#111" strokeWidth="1.300"><path d="M.5 8.500L8 1l7.500 7.500" /></svg>
        <svg width="16" height="16" viewBox="0 0 16 16" className="ml-[15px]" fill="none" stroke="#111" strokeWidth="1.100"><path d="M1 15.500A14.500 14.500 0 0 1 15.500 1M4.500 15.500a11 11 0 0 1 11-11M8 15.500A7.500 7.500 0 0 1 15.500 8M11 15.500a4.500 4.500 0 0 1 4.500-4.500" /><circle cx="14" cy="14" r="1.500" fill="#111" /></svg>
        <svg width="21" height="15" viewBox="0 0 21 15" className="ml-[10px]"><path d="M5.500 3h13.500v9H5.500z" fill="none" stroke="#000" /><path d="M7 4.500h10.500v6H7zM19.500 5.500H21v4h-1.500z" /><path d="M1.500 0v3M4 0v3M.8 3h4v2.500c0 .8-.5 1.200-1.200 1.200H2C1.300 6.700.8 6.300.8 5.500zM2.800 7v3.500h3" fill="none" stroke="#000" /></svg>
        <svg width="15" height="18" viewBox="0 0 15 18" className="ml-[14px]" fill="none" stroke="#111" strokeWidth="1.200"><rect x="1" y="4.500" width="9" height="9" rx="1.500" /><path d="M10 8l4-2.500v7L10 10M1.500 2Q6 .2 10.500 2M1.500 16Q6 17.800 10.500 16" /></svg>
        <svg width="21" height="17" viewBox="0 0 21 17" className="ml-[11px]" fill="none" stroke="#111" strokeWidth="1.200"><path d="M1 6h2.500l4-4v13l-4-4H1zM10.500 6q1.500 2.500 0 5M13.500 4q3 4.500 0 9" /><path d="M16.500 1.500q5 7 0 14" stroke="#999" /></svg>
        <svg width="30" height="17" viewBox="0 0 30 17" className="ml-[9px]" fill="none" stroke="#111" strokeWidth="1.200"><rect x="0.600" y="0.600" width="28.800" height="15.800" /><path d="M4 5h22M4 8.500h22" strokeDasharray="1.500 1.800" /><path d="M4 12.500h3M9 12.500h12M23 12.500h3" /></svg>
        <div className="ml-[10px] w-[74px] text-center text-[14.500px] leading-[23px] tracking-[-0.200px] whitespace-nowrap text-[#222]">
          <div>7:03 AM</div>
          <div>4/17/2025</div>
        </div>
        <div className="relative mt-[9px] ml-[20px] h-[30px] w-[30px]">
          <svg width="30" height="30" viewBox="0 0 30 30">
            <path d="M0 0h20v17H7l-4 4v-4H0z" fill="#000" />
            <path d="M4 4.500h12M4 8.500h12M4 12.500h8" stroke="#eee" strokeWidth="1.200" />
          </svg>
          <div className="absolute top-[9px] left-[9px] flex size-[21px] items-center justify-center rounded-full border border-[#777] bg-[#cfcbca]/95 text-[14px] leading-none text-black">1</div>
        </div>
        <div className="ml-[15px] h-full w-px bg-[#b9adac]" />
        <div className="w-[5px]" />
      </div>
    </div>
  );
}

export default function App() {
  return (
    <div className="flex h-[1080px] w-[1920px] flex-col overflow-hidden bg-[#f7f7f7] font-['Noto_Sans',sans-serif] text-black">
      <TabBar />
      <Toolbar />
      <div className="mr-[6px] ml-[5px] flex h-[933px] overflow-hidden rounded-[10px] bg-white shadow-[0_0_2px_1px_rgba(0,0,0,0.120)]">
        <Content />
        <div className="flex w-[17px] flex-col items-center bg-[#fcfcfc] pt-[12px]">
          <svg width="13" height="7" viewBox="0 0 13 7" fill="#8a8a8a"><path d="M6.500 0L13 7H0z" /></svg>
          <div className="mt-[85px] h-[800px] w-[11px] rounded-full bg-[#8b8b8b]" />
          <svg width="13" height="7" viewBox="0 0 13 7" fill="#8a8a8a" className="mt-[10px]"><path d="M6.500 7L13 0H0z" /></svg>
        </div>
      </div>
      <div className="h-[4px] shrink-0" />
      <Taskbar />
    </div>
  );
}
